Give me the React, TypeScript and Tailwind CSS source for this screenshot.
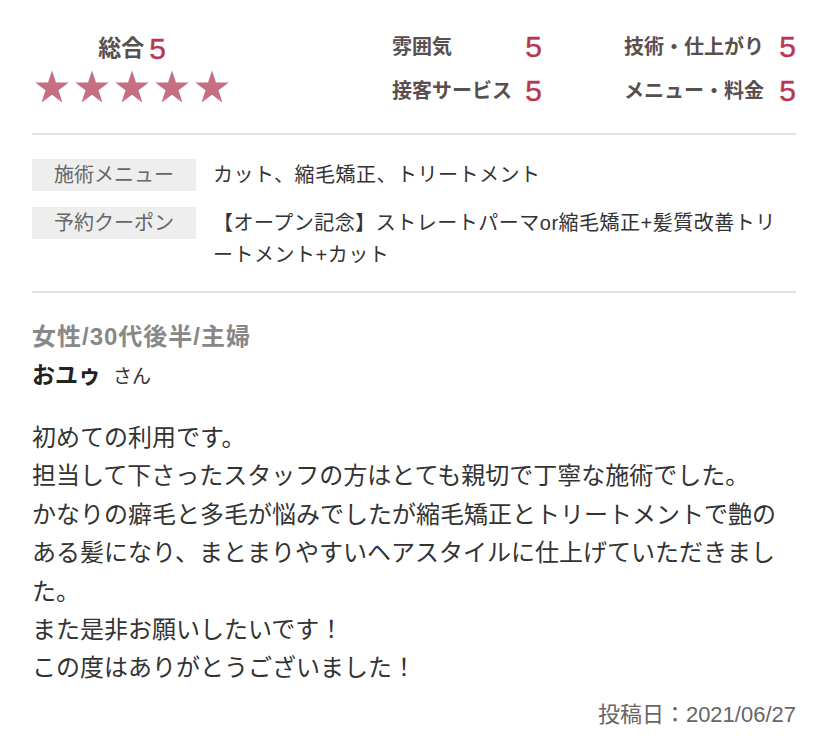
const STAR_POINTS =
  "50,0 61.23,34.55 97.55,34.55 68.17,55.9 79.39,90.45 50,69.1 20.61,90.45 31.83,55.9 2.45,34.55 38.77,34.55";

function Star() {
  return (
    <svg viewBox="2 0 96 91" className="h-[33px] w-[34px]" fill="#c66e82">
      <polygon points={STAR_POINTS} />
    </svg>
  );
}

const ratings = [
  { label: "雰囲気", score: 5 },
  { label: "技術・仕上がり", score: 5 },
  { label: "接客サービス", score: 5 },
  { label: "メニュー・料金", score: 5 },
];

const body = [
  "初めての利用です。",
  "担当して下さったスタッフの方はとても親切で丁寧な施術でした。",
  "かなりの癖毛と多毛が悩みでしたが縮毛矯正とトリートメントで艶の",
  "ある髪になり、まとまりやすいヘアスタイルに仕上げていただきまし",
  "た。",
  "また是非お願いしたいです！",
  "この度はありがとうございました！",
];

export default function App() {
  return (
    <div className="min-h-screen bg-white font-['Liberation_Sans','Noto_Sans_CJK_JP',sans-serif] text-[#333]">
      <div className="px-8">
        {/* 評価 */}
        <section className="flex items-start pt-[31px] pb-[26px]">
          <div className="mt-[3px] flex w-[200px] flex-col items-center">
            <div className="flex h-[28px] items-center">
              <span className="text-[23px] font-bold text-[#5a4f50]">総合</span>
              <span className="ml-[5px] text-[30px] text-[#b5384f] [-webkit-text-stroke:0.4px_#b5384f]">5</span>
            </div>
            <div className="mt-[8px] flex gap-[6px]">
              {[0, 1, 2, 3, 4].map((i) => (
                <Star key={i} />
              ))}
            </div>
          </div>
          <div className="ml-auto grid grid-cols-[150px_172px] gap-x-[82px] gap-y-3">
            {ratings.map((r) => (
              <div key={r.label} className="flex h-8 items-center justify-between">
                <span className="text-[20px] font-bold text-[#5a4f50]">{r.label}</span>
                <span className="text-[30px] leading-none text-[#b5384f] [-webkit-text-stroke:0.4px_#b5384f]">
                  {r.score}
                </span>
              </div>
            ))}
          </div>
        </section>

        <div className="h-[2px] bg-[#e2e2e2]" />

        {/* メニュー・クーポン */}
        <section className="grid grid-cols-[164px_1fr] gap-x-[17px] gap-y-4 pt-6 pb-5">
          <div className="flex h-8 items-center justify-center bg-[#eeeeee] text-[20px] text-[#666]">
            施術メニュー
          </div>
          <div className="text-[20px] leading-8 tracking-[0.5px] text-[#333]">
            カット、縮毛矯正、トリートメント
          </div>
          <div className="flex h-8 items-center justify-center bg-[#eeeeee] text-[20px] text-[#666]">
            予約クーポン
          </div>
          <div className="whitespace-nowrap text-[20px] leading-8 tracking-[0.5px] text-[#333]">
            【オープン記念】ストレートパーマor縮毛矯正+髪質改善トリ
            <br />
            ートメント+カット
          </div>
        </section>

        <div className="h-[2px] bg-[#e2e2e2]" />

        {/* 口コミ */}
        <section className="pt-[28px]">
          <p className="text-[24px] font-bold leading-8 tracking-[1px] text-[#888]">女性/30代後半/主婦</p>
          <p className="mt-[6px] flex items-baseline leading-8">
            <span className="text-[23px] font-bold text-[#222]">おユゥ</span>
            <span className="ml-[12px] text-[19px] text-[#333]">さん</span>
          </p>
          <p className="mt-[26px] whitespace-nowrap text-[24px] leading-[38.4px] text-[#333]">
            {body.map((line, i) => (
              <span key={i}>
                {line}
                {i < body.length - 1 && <br />}
              </span>
            ))}
          </p>
          <p className="mt-[11px] text-right text-[22px] leading-8 text-[#666]">
            投稿日：2021/06/27
          </p>
        </section>
      </div>
    </div>
  );
}
